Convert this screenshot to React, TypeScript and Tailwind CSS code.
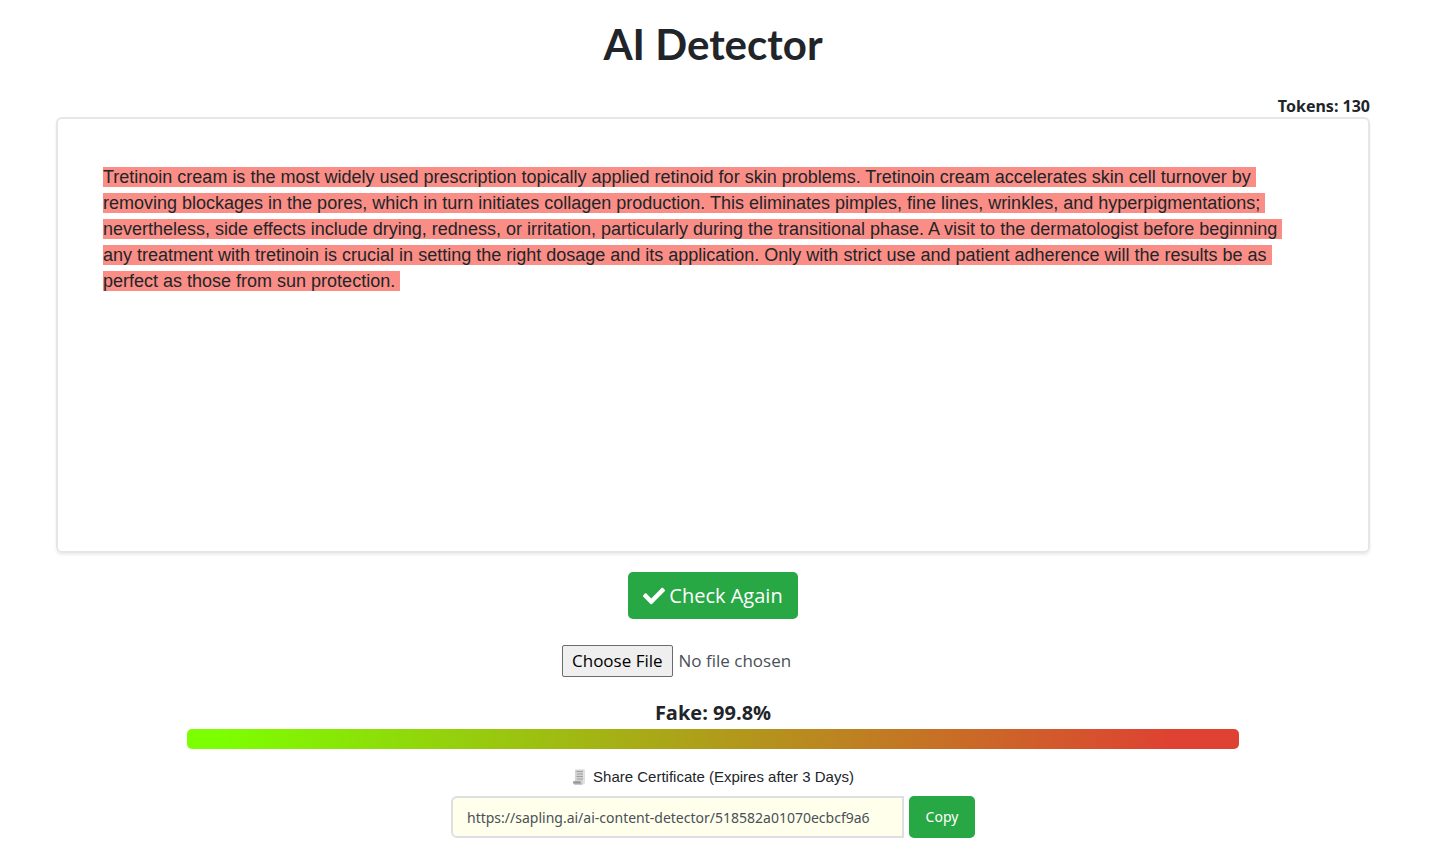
import { useState } from "react";

const SAMPLE =
  "Tretinoin cream is the most widely used prescription topically applied retinoid for skin problems. Tretinoin cream accelerates skin cell turnover by removing blockages in the pores, which in turn initiates collagen production. This eliminates pimples, fine lines, wrinkles, and hyperpigmentations; nevertheless, side effects include drying, redness, or irritation, particularly during the transitional phase. A visit to the dermatologist before beginning any treatment with tretinoin is crucial in setting the right dosage and its application. Only with strict use and patient adherence will the results be as perfect as those from sun protection.";

function CheckIcon() {
  return (
    <svg viewBox="0 0 512 512" className="size-[22px]" fill="currentColor" aria-hidden="true">
      <path d="M173.9 439.4 7.500 273c-10-10-10-26.200 0-36.200l36.200-36.200c10-10 26.200-10 36.200 0L192 312.700 432.100 72.600c10-10 26.200-10 36.200 0l36.200 36.200c10 10 10 26.200 0 36.200L210.100 439.400c-10 10-26.200 10-36.200 0z" />
    </svg>
  );
}

function ScrollIcon() {
  return (
    <svg viewBox="0 0 14 16" className="h-4 w-3.5" aria-hidden="true">
      <path d="M3 1.500Q3 0.500 4 0.500H12.500Q11.500 1.500 11.500 3V13Q11.500 15.500 9.500 15.500H3Z" fill="#d3d3d3" />
      <path d="M11.500 0.500H12Q13 0.500 13 2V13Q13 15.500 10.500 15.500H9.500Q11.500 15 11.500 13Z" fill="#dedede" />
      <path d="M4.500 2.500H11M5 5H11M4.500 7.500H11M5 10H11" stroke="#a0a0a0" strokeWidth="1.200" />
      <path d="M1.500 12.500H8.500Q8.500 14.800 10.500 15.500H2.500Q0.500 15 1.500 12.500Z" fill="#a9a9a9" />
      <path d="M1 13H8.500" stroke="#898989" />
    </svg>
  );
}

export default function App() {
  const [link, setLink] = useState("https://sapling.ai/ai-content-detector/518582a01070ecbcf9a6");

  return (
    <main className="flex flex-col items-center bg-white pt-4 pr-[66px] pb-6 pl-14 font-['Open_Sans','Noto_Sans',sans-serif] text-[#212529]">
      <h1 className="font-['Lato',sans-serif] text-[42px] leading-[56px] font-bold">AI Detector</h1>

      <p className="mt-6 self-end font-['Noto_Sans',sans-serif] text-base leading-[21px] font-bold">Tokens: 130</p>
      <section
        aria-label="Text to check"
        className="h-[436px] w-full rounded-md border-2 border-[#e6e6e6] py-[45px] pr-[66px] pl-[45px] font-['Liberation_Sans',Arial,sans-serif] text-lg leading-[26px] shadow-[0_2px_3px_rgba(0,0,0,0.08)]"
      >
        <mark className="box-decoration-clone bg-[#fa8e86] pr-[5px] text-inherit">{SAMPLE}</mark>
      </section>

      <button type="button" className="mt-[19px] flex h-[47px] items-center gap-1 rounded-[5px] bg-[#28a745] px-[15px] text-xl text-white">
        <CheckIcon />
        Check Again
      </button>

      <input
        type="file"
        aria-label="Upload a file"
        className="mt-[26px] h-8 w-[302px] text-[17px] leading-6 text-[#495057] file:mr-1.5 file:h-8 file:rounded-xs file:border file:border-solid file:border-[#6b6b70] file:bg-[#efefef] file:px-[9px] file:text-[17px] file:leading-6 file:text-black"
      />

      <section className="mt-[21px] flex w-4/5 flex-col items-center">
        <h2 className="mb-px text-xl leading-[30px] font-bold" id="score">
          Fake: 99.8%
        </h2>
        <div
          role="img"
          aria-labelledby="score"
          className="h-5 w-full rounded-[5px] bg-linear-to-r/srgb from-[#7cff00] from-3% to-[#df4132] to-94%"
        />
      </section>

      <label htmlFor="share" className="mt-[18px] flex items-center gap-[7px] font-['Liberation_Sans',Arial,sans-serif] text-[15px] leading-5 text-[#212529]">
        <ScrollIcon />
        Share Certificate (Expires after 3 Days)
      </label>
      <div className="mt-[9px] flex gap-[5px] font-['Noto_Sans',sans-serif] text-sm">
        <input
          id="share"
          type="text"
          value={link}
          onChange={(e) => setLink(e.target.value)}
          className="h-[42px] w-[453px] rounded-l-md border-2 border-[#dddfe2] bg-[#ffffec] px-3.5 text-[#495057]"
        />
        <button type="button" className="h-[42px] w-[66px] rounded-[5px] bg-[#28a745] text-white">
          Copy
        </button>
      </div>
    </main>
  );
}
